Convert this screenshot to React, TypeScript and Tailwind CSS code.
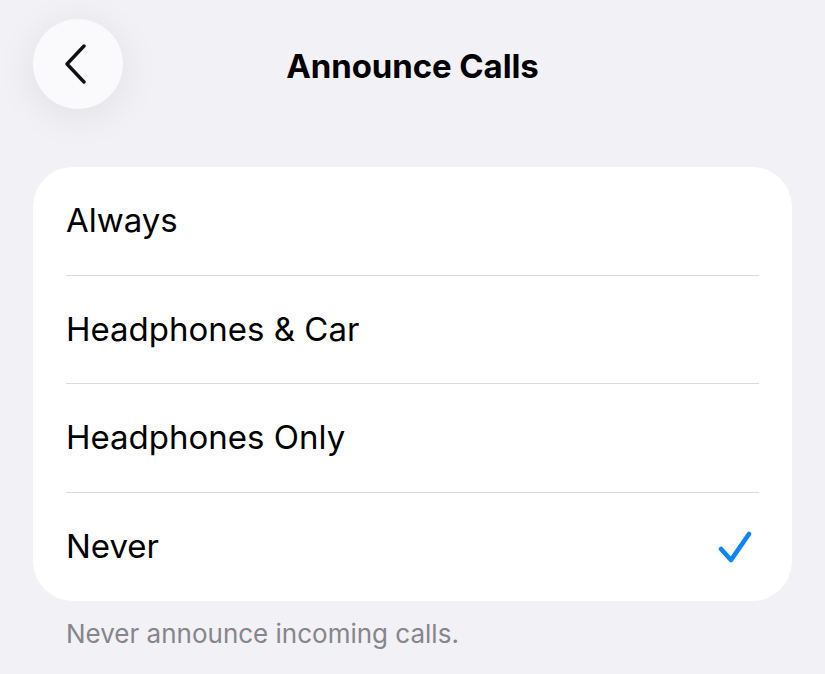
import React from "react";

const rows = ["Always", "Headphones & Car", "Headphones Only", "Never"];

export default function App() {
  return (
    <div
      className="w-[825px] h-[674px] overflow-hidden bg-[#f2f1f6] flex flex-col"
      style={{ fontFamily: "Inter, 'Noto Sans', sans-serif" }}
    >
      <div className="relative h-[128px] flex items-start">
        <div className="ml-[33px] mt-[19px] w-[90px] h-[90px] rounded-full bg-[#fafafd] shadow-[0_6px_40px_rgba(0,0,0,0.08)] flex items-center justify-center">
          <svg width="24" height="40" viewBox="0 0 24 40" className="-ml-[4px]">
            <path d="M20 2 L3 20 L20 38" fill="none" stroke="#111" strokeWidth="3.4" strokeLinecap="round" strokeLinejoin="round" />
          </svg>
        </div>
        <div className="absolute left-0 right-0 top-[44px] text-center text-[33px] leading-[44px] font-bold text-black tracking-[-0.1px]">
          Announce Calls
        </div>
      </div>
      <div className="mx-[33px] mt-[39px] bg-white rounded-[40px] flex flex-col">
        {rows.map((r, i) => (
          <div key={r} className="px-[33px]">
            <div
              className={`h-[108.5px] flex items-center justify-between ${i < rows.length - 1 ? "border-b border-[#dcdce0]" : ""}`}
            >
              <span className="text-[33px] text-black tracking-[0px]">{r}</span>
              {i === rows.length - 1 && (
                <svg width="36" height="34" viewBox="0 0 36 34" className="mr-[6px]">
                  <path d="M4 19 L14 30 L32 4" fill="none" stroke="#0a84ff" strokeWidth="4.6" strokeLinecap="round" strokeLinejoin="round" />
                </svg>
              )}
            </div>
          </div>
        ))}
      </div>
      <div className="mx-[66px] mt-[13px] text-[26px] text-[#86858b] tracking-[0px]">
        Never announce incoming calls.
      </div>
    </div>
  );
}
